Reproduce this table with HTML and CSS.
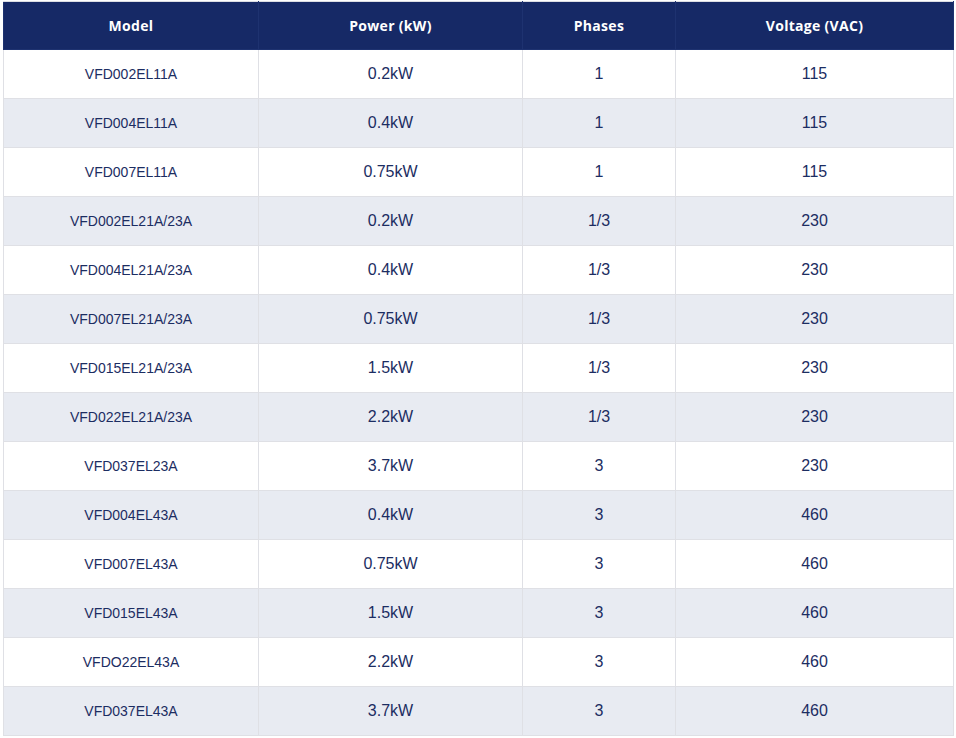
FILE: index.html
```html
<!DOCTYPE html>
<html lang="en">
<head>
<meta charset="utf-8">
<title>VFD-EL Models</title>
<link rel="stylesheet" href="styles.css">
</head>
<body>
<div class="wrap">
<table class="spec">
  <colgroup>
    <col class="c1"><col class="c2"><col class="c3"><col class="c4">
  </colgroup>
  <thead>
    <tr><th>Model</th><th>Power (kW)</th><th>Phases</th><th>Voltage (VAC)</th></tr>
  </thead>
  <tbody>
    <tr><td class="model">VFD002EL11A</td><td>0.2kW</td><td>1</td><td>115</td></tr>
    <tr><td class="model">VFD004EL11A</td><td>0.4kW</td><td>1</td><td>115</td></tr>
    <tr><td class="model">VFD007EL11A</td><td>0.75kW</td><td>1</td><td>115</td></tr>
    <tr><td class="model">VFD002EL21A/23A</td><td>0.2kW</td><td>1/3</td><td>230</td></tr>
    <tr><td class="model">VFD004EL21A/23A</td><td>0.4kW</td><td>1/3</td><td>230</td></tr>
    <tr><td class="model">VFD007EL21A/23A</td><td>0.75kW</td><td>1/3</td><td>230</td></tr>
    <tr><td class="model">VFD015EL21A/23A</td><td>1.5kW</td><td>1/3</td><td>230</td></tr>
    <tr><td class="model">VFD022EL21A/23A</td><td>2.2kW</td><td>1/3</td><td>230</td></tr>
    <tr><td class="model">VFD037EL23A</td><td>3.7kW</td><td>3</td><td>230</td></tr>
    <tr><td class="model">VFD004EL43A</td><td>0.4kW</td><td>3</td><td>460</td></tr>
    <tr><td class="model">VFD007EL43A</td><td>0.75kW</td><td>3</td><td>460</td></tr>
    <tr><td class="model">VFD015EL43A</td><td>1.5kW</td><td>3</td><td>460</td></tr>
    <tr><td class="model">VFDO22EL43A</td><td>2.2kW</td><td>3</td><td>460</td></tr>
    <tr><td class="model">VFD037EL43A</td><td>3.7kW</td><td>3</td><td>460</td></tr>
  </tbody>
</table>
</div>
</body>
</html>
```
FILE: styles.css
```css
html, body {
  margin: 0;
  padding: 0;
  background: #ffffff;
}
.wrap {
  padding: 1px 3px 0 3px;
}
.spec {
  width: 950px;
  border-collapse: collapse;
  table-layout: fixed;
  border: 1px solid #dcdde3;
  font-family: "Liberation Sans", Arial, sans-serif;
  color: #1c2d62;
}
.c1 { width: 255px; }
.c2 { width: 264px; }
.c3 { width: 153px; }
.c4 { width: 278px; }
.spec th {
  background: #162966;
  color: #ffffff;
  font-family: "Open Sans", "DejaVu Sans", sans-serif;
  font-weight: 700;
  font-size: 14px;
  letter-spacing: 0.3px;
  height: 47px;
  padding: 0;
  text-align: center;
  vertical-align: middle;
  border: 1px solid #1e3270;
  border-top-color: #dcdde3;
}
.spec td {
  height: 48px;
  padding: 0;
  text-align: center;
  vertical-align: middle;
  font-size: 16px;
  border: 1px solid #dfe0e5;
}
.spec td.model {
  font-size: 14px;
}
.spec tbody tr:nth-child(even) td {
  background: #e8ebf2;
}
```
